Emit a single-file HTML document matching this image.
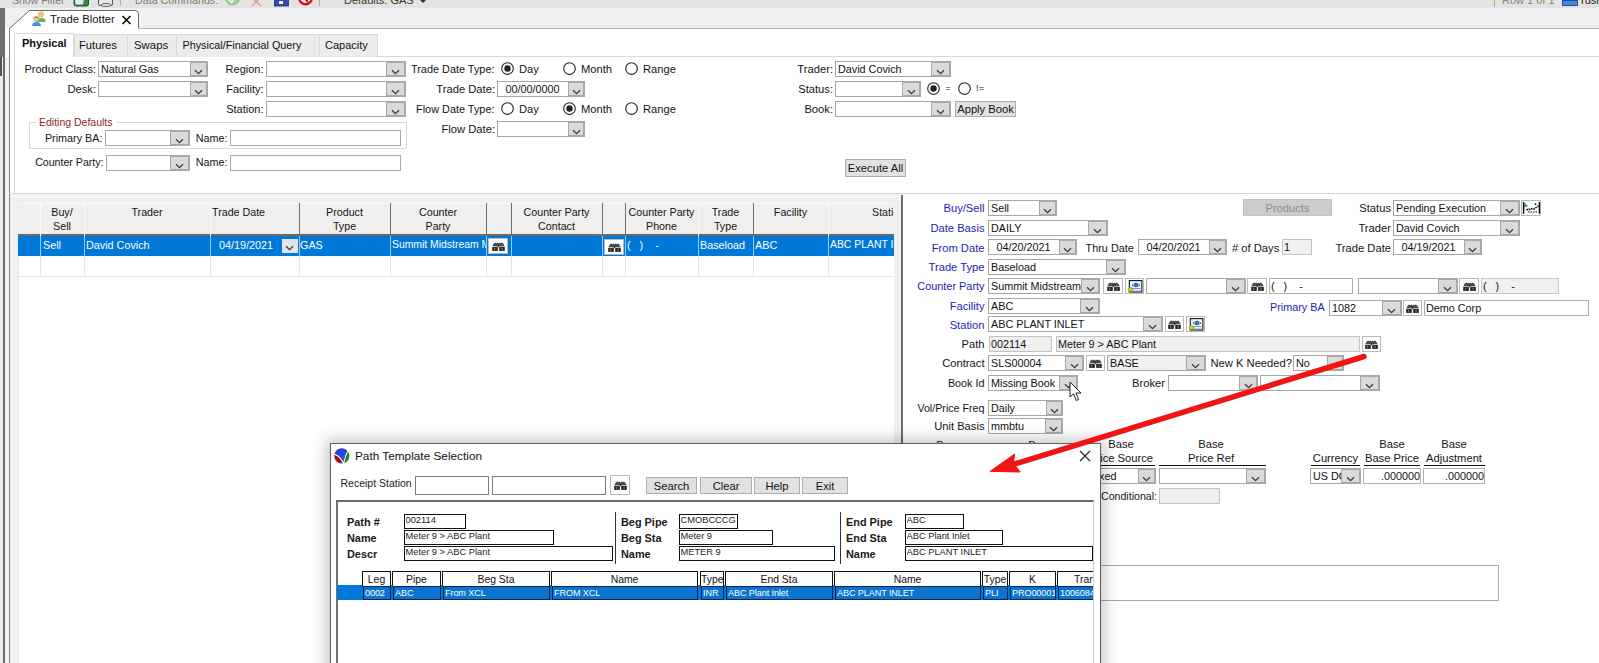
<!DOCTYPE html><html><head><meta charset="utf-8"><style>
html,body{margin:0;padding:0;}
body{width:1599px;height:663px;overflow:hidden;position:relative;background:#fff;font-family:"Liberation Sans",sans-serif;font-size:11.2px;color:#1e1e1e;}
.t,.ct,.r,.cb,.dd,.tb,.bt,.ib,.ic,.chev{position:absolute;box-sizing:border-box;}
.t{white-space:nowrap;line-height:14px;}
.ct{white-space:nowrap;overflow:hidden;font-size:10.8px;}
.cb{border:1px solid #a6a6a6;}
.dd{background:#dadada;border:2px solid #a8a8a8;border-left-width:1px;}
.tb{}
.bt{border:1px solid #adadad;text-align:center;white-space:nowrap;}
.ib{border:1px solid #b9b9b9;background:#fff;}
</style></head><body>

<div class="r" style="left:0px;top:0px;width:1599px;height:8px;background:#e5e3df;"></div>
<div class="r" style="left:0px;top:8px;width:1599px;height:20px;background:#f0f0f3;"></div>
<div class="t" style="left:12px;top:-7px;color:#7a7a7a;font-size:10.5px;">Show Filter</div>
<svg class="ic" style="left:73px;top:-4px" width="17" height="11" viewBox="0 0 17 11"><rect x="1" y="0.5" width="14.5" height="9.5" rx="2" fill="#2e8a2e" stroke="#2a4a3a" stroke-width="1"/><path d="M2 3 H11 L10 8.5 H2.5Z" fill="#dfeaf3"/></svg>
<svg class="ic" style="left:97px;top:-4px" width="18" height="11" viewBox="0 0 18 11"><rect x="1.5" y="0.5" width="14" height="9" rx="1.5" fill="#e6e6e6" stroke="#555" stroke-width="1"/><ellipse cx="9" cy="9" rx="5" ry="1.6" fill="#cfd6e6" stroke="#555" stroke-width="0.8"/></svg>
<div class="r" style="left:120px;top:0px;width:1px;height:6px;background:#b0b0b0;"></div>
<div class="t" style="left:135px;top:-7px;color:#7a7a7a;font-size:10.7px;">Data Commands:</div>
<svg class="ic" style="left:224px;top:-9px" width="17" height="15" viewBox="0 0 17 15"><circle cx="8.5" cy="7" r="7" fill="#9fd49a" stroke="#7fb87a" stroke-width="0.8"/><path d="M5 9 L7.5 11.5 L12 5" stroke="#eef8ee" stroke-width="1.6" fill="none"/></svg>
<svg class="ic" style="left:250px;top:-3px" width="13" height="10" viewBox="0 0 13 10"><path d="M1 0 L11 9 M11 0 L2 9" stroke="#e39a88" stroke-width="1.4"/></svg>
<svg class="ic" style="left:274px;top:-3px" width="15" height="10" viewBox="0 0 15 10"><rect x="0.5" y="0" width="14" height="9" fill="#3b46b4" stroke="#1e2a7a" stroke-width="0.8"/><rect x="5" y="4" width="4" height="3" fill="#f0f0ff"/></svg>
<svg class="ic" style="left:298px;top:-9px" width="15" height="15" viewBox="0 0 15 15"><circle cx="7.5" cy="7" r="6.3" fill="#fff" stroke="#d41414" stroke-width="2.4"/><path d="M5.5 3 L9.5 11" stroke="#d41414" stroke-width="2.2"/></svg>
<div class="r" style="left:319px;top:0px;width:1px;height:6px;background:#b0b0b0;"></div>
<div class="t" style="left:344px;top:-7px;color:#333;font-size:11px;">Defaults: GAS</div>
<svg class="ic" style="left:420px;top:0px" width="6" height="4"><path d="M0 0 L6 0 L3 3Z" fill="#333"/></svg>
<div class="r" style="left:1494px;top:0px;width:1px;height:7px;background:#a8a8a8;"></div>
<div class="t" style="left:1502px;top:-7px;color:#808080;font-size:11px;">Row 1 of 1</div>
<div class="r" style="left:1562px;top:0px;width:16px;height:6px;background:#4d86d6;border:1px solid #1f4fa0;"></div>
<div class="t" style="left:1581px;top:-7px;color:#222;font-size:11px;">rusr</div>
<div class="r" style="left:0px;top:8px;width:5px;height:49px;background:#6e6e6e;"></div>
<div class="r" style="left:0px;top:57px;width:3px;height:606px;background:#ececec;"></div>
<div class="r" style="left:0px;top:57px;width:2px;height:19px;border:1px solid #555;box-sizing:border-box;"></div>
<div class="r" style="left:3px;top:57px;width:2px;height:606px;background:#6a6a6a;"></div>
<div class="r" style="left:5px;top:57px;width:4px;height:606px;background:#f3f3f3;"></div>
<svg class="ic" style="left:0;top:0" width="1599" height="40"><path d="M9.5 40 L9.5 28.5 L29.5 10.5 L135 10.5 Q138.5 10.5 138.5 14 L138.5 28.5 L1599 28.5" fill="#fff" stroke="#686868" stroke-width="1"/><path d="M138.5 28.5 L1599 28.5 L1599 40 L9.5 40 L9.5 28.5Z" fill="#fff"/></svg>
<div class="r" style="left:9px;top:28px;width:1px;height:635px;background:#808080;"></div>
<svg class="ic" style="left:31px;top:11px" width="16" height="16" viewBox="0 0 16 16"><circle cx="10" cy="3.5" r="2.6" fill="#f2c98a" stroke="#c9a64a" stroke-width="0.6"/><path d="M6 9 Q10 5.5 14.5 8.5 L14.5 11 L6 11Z" fill="#5cb85c"/><path d="M7 2.2 Q10 0 13 2.2 L13 3 Q10 1.5 7 3Z" fill="#e8c040"/><circle cx="5.5" cy="8" r="2.6" fill="#f3c9a0" stroke="#b07a4a" stroke-width="0.5"/><path d="M3 6.8 Q5.5 4.5 8 6.8 L8 7.2 Q5.5 6 3 7.2Z" fill="#8a5a2a"/><path d="M1 15 Q1.5 11 5.5 11 Q9.5 11 10 15Z" fill="#3b8fe0"/></svg>
<div class="t" style="left:50px;top:11.600000000000001px;color:#111;font-size:11.3px;">Trade Blotter</div>
<svg class="ic" style="left:121px;top:15px" width="11" height="10" viewBox="0 0 11 10"><path d="M1.5 1 L9.5 9 M9.5 1 L1.5 9" stroke="#000" stroke-width="1.5"/></svg>
<div class="r" style="left:10px;top:29px;width:1589px;height:634px;background:#fff;"></div>
<div class="r" style="left:74px;top:34px;width:303px;height:23px;background:#ececec;"></div>
<div class="r" style="left:74px;top:34px;width:1px;height:23px;background:#d9d9d9;"></div>
<div class="r" style="left:127px;top:34px;width:1px;height:23px;background:#d9d9d9;"></div>
<div class="r" style="left:176px;top:34px;width:1px;height:23px;background:#d9d9d9;"></div>
<div class="r" style="left:314px;top:34px;width:1px;height:23px;background:#e2e2e2;"></div>
<div class="r" style="left:319px;top:34px;width:1px;height:23px;background:#d9d9d9;"></div>
<div class="r" style="left:377px;top:34px;width:1px;height:23px;background:#d9d9d9;"></div>
<div class="r" style="left:74px;top:34px;width:303px;height:1px;background:#d9d9d9;"></div>
<div class="r" style="left:377px;top:56px;width:1222px;height:1px;background:#d9d9d9;"></div>
<div class="r" style="left:14px;top:33px;width:60px;height:24px;background:#fff;border:1px solid #d9d9d9;border-bottom:none;box-sizing:border-box;"></div>
<div class="t" style="left:22px;top:36px;color:#111;font-size:11px;font-weight:bold;">Physical</div>
<div class="t" style="left:79px;top:38px;color:#111;font-size:11.2px;">Futures</div>
<div class="t" style="left:134px;top:38px;color:#111;font-size:11.4px;">Swaps</div>
<div class="t" style="left:182.5px;top:38px;color:#111;font-size:10.8px;">Physical/Financial Query</div>
<div class="t" style="left:325px;top:38px;color:#111;font-size:11px;">Capacity</div>
<div class="r" style="left:14px;top:56px;width:1px;height:138px;background:#d4d4d4;"></div>
<div class="r" style="left:9px;top:193px;width:1590px;height:1px;background:#d4d4d4;"></div>
<div class="t" style="left:-304px;width:400px;text-align:right;top:62px;color:#141414;font-size:11px;">Product Class:</div>
<div class="cb" style="left:98px;top:61px;width:110px;height:16px;background:#fff"></div>
<div class="ct" style="left:101px;top:61px;width:89px;height:16px;line-height:16px;color:#111">Natural Gas</div>
<div class="dd" style="left:190px;top:61px;width:18px;height:16px"></div>
<svg class="chev" style="left:194.0px;top:68.6px" width="9" height="6" viewBox="0 0 9 6"><path d="M1 1.2 L4.5 4.6 L8 1.2" fill="none" stroke="#3a3a3a" stroke-width="1.3"/></svg>
<div class="t" style="left:-304px;width:400px;text-align:right;top:82px;color:#141414;font-size:11.2px;">Desk:</div>
<div class="cb" style="left:98px;top:81px;width:110px;height:16px;background:#fff"></div>
<div class="dd" style="left:190px;top:81px;width:18px;height:16px"></div>
<svg class="chev" style="left:194.0px;top:88.6px" width="9" height="6" viewBox="0 0 9 6"><path d="M1 1.2 L4.5 4.6 L8 1.2" fill="none" stroke="#3a3a3a" stroke-width="1.3"/></svg>
<div class="t" style="left:-136.5px;width:400px;text-align:right;top:62px;color:#141414;font-size:11px;">Region:</div>
<div class="cb" style="left:266px;top:61px;width:140px;height:16px;background:#fff"></div>
<div class="dd" style="left:386px;top:61px;width:20px;height:16px"></div>
<svg class="chev" style="left:391.0px;top:68.6px" width="9" height="6" viewBox="0 0 9 6"><path d="M1 1.2 L4.5 4.6 L8 1.2" fill="none" stroke="#3a3a3a" stroke-width="1.3"/></svg>
<div class="t" style="left:-136.5px;width:400px;text-align:right;top:82px;color:#141414;font-size:11px;">Facility:</div>
<div class="cb" style="left:266px;top:81px;width:140px;height:16px;background:#fff"></div>
<div class="dd" style="left:386px;top:81px;width:20px;height:16px"></div>
<svg class="chev" style="left:391.0px;top:88.6px" width="9" height="6" viewBox="0 0 9 6"><path d="M1 1.2 L4.5 4.6 L8 1.2" fill="none" stroke="#3a3a3a" stroke-width="1.3"/></svg>
<div class="t" style="left:-136.5px;width:400px;text-align:right;top:102px;color:#141414;font-size:11px;">Station:</div>
<div class="cb" style="left:266px;top:101px;width:140px;height:16px;background:#fff"></div>
<div class="dd" style="left:386px;top:101px;width:20px;height:16px"></div>
<svg class="chev" style="left:391.0px;top:108.6px" width="9" height="6" viewBox="0 0 9 6"><path d="M1 1.2 L4.5 4.6 L8 1.2" fill="none" stroke="#3a3a3a" stroke-width="1.3"/></svg>
<div class="t" style="left:94.5px;width:400px;text-align:right;top:62px;color:#141414;font-size:10.9px;">Trade Date Type:</div>
<svg class="ic" style="left:500.9px;top:62.3px" width="13" height="13" viewBox="0 0 13 13"><circle cx="6.5" cy="6.5" r="5.8" fill="#fff" stroke="#2a2a2a" stroke-width="1.15"/><circle cx="6.5" cy="6.5" r="3.2" fill="#222"/></svg>
<div class="t" style="left:519px;top:62px;color:#141414;font-size:11.2px;">Day</div>
<svg class="ic" style="left:562.9px;top:62.3px" width="13" height="13" viewBox="0 0 13 13"><circle cx="6.5" cy="6.5" r="5.8" fill="#fff" stroke="#2a2a2a" stroke-width="1.15"/></svg>
<div class="t" style="left:581px;top:62px;color:#141414;font-size:11.2px;">Month</div>
<svg class="ic" style="left:624.8px;top:62.3px" width="13" height="13" viewBox="0 0 13 13"><circle cx="6.5" cy="6.5" r="5.8" fill="#fff" stroke="#2a2a2a" stroke-width="1.15"/></svg>
<div class="t" style="left:643px;top:62px;color:#141414;font-size:11.2px;">Range</div>
<div class="t" style="left:95px;width:400px;text-align:right;top:82px;color:#141414;font-size:11.2px;">Trade Date:</div>
<div class="cb" style="left:497px;top:81px;width:88px;height:16px;background:#fff"></div>
<div class="ct" style="left:497px;top:81px;width:71px;height:16px;line-height:16px;text-align:center;color:#111">00/00/0000</div>
<div class="dd" style="left:568px;top:81px;width:17px;height:16px"></div>
<svg class="chev" style="left:571.5px;top:88.6px" width="9" height="6" viewBox="0 0 9 6"><path d="M1 1.2 L4.5 4.6 L8 1.2" fill="none" stroke="#3a3a3a" stroke-width="1.3"/></svg>
<div class="t" style="left:94.5px;width:400px;text-align:right;top:102px;color:#141414;font-size:10.9px;">Flow Date Type:</div>
<svg class="ic" style="left:500.9px;top:102.3px" width="13" height="13" viewBox="0 0 13 13"><circle cx="6.5" cy="6.5" r="5.8" fill="#fff" stroke="#2a2a2a" stroke-width="1.15"/></svg>
<div class="t" style="left:519px;top:102px;color:#141414;font-size:11.2px;">Day</div>
<svg class="ic" style="left:562.9px;top:102.3px" width="13" height="13" viewBox="0 0 13 13"><circle cx="6.5" cy="6.5" r="5.8" fill="#fff" stroke="#2a2a2a" stroke-width="1.15"/><circle cx="6.5" cy="6.5" r="3.2" fill="#222"/></svg>
<div class="t" style="left:581px;top:102px;color:#141414;font-size:11.2px;">Month</div>
<svg class="ic" style="left:624.8px;top:102.3px" width="13" height="13" viewBox="0 0 13 13"><circle cx="6.5" cy="6.5" r="5.8" fill="#fff" stroke="#2a2a2a" stroke-width="1.15"/></svg>
<div class="t" style="left:643px;top:102px;color:#141414;font-size:11.2px;">Range</div>
<div class="t" style="left:95px;width:400px;text-align:right;top:122px;color:#141414;font-size:11.2px;">Flow Date:</div>
<div class="cb" style="left:497px;top:121px;width:88px;height:16px;background:#fff"></div>
<div class="dd" style="left:568px;top:121px;width:17px;height:16px"></div>
<svg class="chev" style="left:571.5px;top:128.6px" width="9" height="6" viewBox="0 0 9 6"><path d="M1 1.2 L4.5 4.6 L8 1.2" fill="none" stroke="#3a3a3a" stroke-width="1.3"/></svg>
<div class="t" style="left:433px;width:400px;text-align:right;top:62px;color:#141414;font-size:11.2px;">Trader:</div>
<div class="cb" style="left:835px;top:61px;width:116px;height:16px;background:#fff"></div>
<div class="ct" style="left:838px;top:61px;width:93px;height:16px;line-height:16px;color:#111">David Covich</div>
<div class="dd" style="left:931px;top:61px;width:20px;height:16px"></div>
<svg class="chev" style="left:936.0px;top:68.6px" width="9" height="6" viewBox="0 0 9 6"><path d="M1 1.2 L4.5 4.6 L8 1.2" fill="none" stroke="#3a3a3a" stroke-width="1.3"/></svg>
<div class="t" style="left:433px;width:400px;text-align:right;top:82px;color:#141414;font-size:11.2px;">Status:</div>
<div class="cb" style="left:835px;top:81px;width:86px;height:16px;background:#fff"></div>
<div class="dd" style="left:902px;top:81px;width:19px;height:16px"></div>
<svg class="chev" style="left:906.5px;top:88.6px" width="9" height="6" viewBox="0 0 9 6"><path d="M1 1.2 L4.5 4.6 L8 1.2" fill="none" stroke="#3a3a3a" stroke-width="1.3"/></svg>
<svg class="ic" style="left:926.8px;top:82.3px" width="13" height="13" viewBox="0 0 13 13"><circle cx="6.5" cy="6.5" r="5.8" fill="#fff" stroke="#2a2a2a" stroke-width="1.15"/><circle cx="6.5" cy="6.5" r="3.2" fill="#222"/></svg>
<div class="t" style="left:945.5px;top:81px;color:#141414;font-size:9px;">=</div>
<svg class="ic" style="left:957.8px;top:82.3px" width="13" height="13" viewBox="0 0 13 13"><circle cx="6.5" cy="6.5" r="5.8" fill="#fff" stroke="#2a2a2a" stroke-width="1.15"/></svg>
<div class="t" style="left:976px;top:81px;color:#141414;font-size:9.5px;">!=</div>
<div class="t" style="left:433px;width:400px;text-align:right;top:102px;color:#141414;font-size:11.2px;">Book:</div>
<div class="cb" style="left:835px;top:101px;width:116px;height:16px;background:#fff"></div>
<div class="dd" style="left:931px;top:101px;width:20px;height:16px"></div>
<svg class="chev" style="left:936.0px;top:108.6px" width="9" height="6" viewBox="0 0 9 6"><path d="M1 1.2 L4.5 4.6 L8 1.2" fill="none" stroke="#3a3a3a" stroke-width="1.3"/></svg>
<div class="bt" style="left:955px;top:101px;width:61px;height:16px;line-height:15px;background:#e1e1e1;border-color:#adadad;color:#111">Apply Book</div>
<div class="bt" style="left:845px;top:159px;width:61px;height:18px;line-height:17px;background:#e1e1e1;border-color:#adadad;color:#111">Execute All</div>
<div class="r" style="left:29px;top:122px;width:378px;height:27px;border:1px solid #d8d8d8;box-sizing:border-box;"></div>
<div class="r" style="left:36px;top:118px;width:80px;height:8px;background:#fff;"></div>
<div class="t" style="left:39px;top:115px;color:#8c2a2a;font-size:10.5px;">Editing Defaults</div>
<div class="t" style="left:-297.5px;width:400px;text-align:right;top:131px;color:#141414;font-size:10.8px;">Primary BA:</div>
<div class="cb" style="left:105px;top:130px;width:85px;height:16px;background:#fff"></div>
<div class="dd" style="left:170px;top:130px;width:20px;height:16px"></div>
<svg class="chev" style="left:175.0px;top:137.6px" width="9" height="6" viewBox="0 0 9 6"><path d="M1 1.2 L4.5 4.6 L8 1.2" fill="none" stroke="#3a3a3a" stroke-width="1.3"/></svg>
<div class="t" style="left:-172.5px;width:400px;text-align:right;top:131px;color:#141414;font-size:10.8px;">Name:</div>
<div class="tb" style="left:230px;top:130px;width:171px;height:16px;background:#fff;border:1px solid #a9a9a9;"></div>
<div class="t" style="left:-296.5px;width:400px;text-align:right;top:155px;color:#141414;font-size:10.6px;">Counter Party:</div>
<div class="cb" style="left:106px;top:155px;width:84px;height:16px;background:#fff"></div>
<div class="dd" style="left:170px;top:155px;width:20px;height:16px"></div>
<svg class="chev" style="left:175.0px;top:162.6px" width="9" height="6" viewBox="0 0 9 6"><path d="M1 1.2 L4.5 4.6 L8 1.2" fill="none" stroke="#3a3a3a" stroke-width="1.3"/></svg>
<div class="t" style="left:-172.5px;width:400px;text-align:right;top:155px;color:#141414;font-size:10.8px;">Name:</div>
<div class="tb" style="left:230px;top:155px;width:171px;height:16px;background:#fff;border:1px solid #a9a9a9;"></div>
<div class="r" style="left:10px;top:194px;width:891px;height:469px;background:#f0f0f0;"></div>
<div class="r" style="left:18px;top:256px;width:876px;height:407px;background:#fff;"></div>
<div class="r" style="left:10px;top:196px;width:891px;height:1px;background:#fbfbfb;"></div>
<div class="r" style="left:18px;top:203px;width:876px;height:31px;background:#efefef;"></div>
<div class="r" style="left:18px;top:203px;width:876px;height:1px;background:#fafafa;"></div>
<div class="r" style="left:40px;top:203px;width:1px;height:31px;background:#fbfbfb;"></div>
<div class="r" style="left:84px;top:203px;width:1px;height:31px;background:#fbfbfb;"></div>
<div class="r" style="left:210px;top:203px;width:1px;height:31px;background:#fbfbfb;"></div>
<div class="r" style="left:299px;top:203px;width:1px;height:32px;background:#6f6f6f;"></div>
<div class="r" style="left:390px;top:203px;width:1px;height:32px;background:#6f6f6f;"></div>
<div class="r" style="left:486px;top:203px;width:1px;height:32px;background:#6f6f6f;"></div>
<div class="r" style="left:511px;top:203px;width:1px;height:32px;background:#6f6f6f;"></div>
<div class="r" style="left:602px;top:203px;width:1px;height:32px;background:#6f6f6f;"></div>
<div class="r" style="left:625px;top:203px;width:1px;height:32px;background:#6f6f6f;"></div>
<div class="r" style="left:698px;top:203px;width:1px;height:31px;background:#fbfbfb;"></div>
<div class="r" style="left:753px;top:203px;width:1px;height:32px;background:#6f6f6f;"></div>
<div class="r" style="left:828px;top:203px;width:1px;height:31px;background:#fbfbfb;"></div>
<div class="r" style="left:18px;top:234px;width:876px;height:2px;background:#6d6a66;"></div>
<div class="r" style="left:40px;top:234px;width:1px;height:2px;background:#fff;"></div>
<div class="r" style="left:84px;top:234px;width:1px;height:2px;background:#fff;"></div>
<div class="r" style="left:210px;top:234px;width:1px;height:2px;background:#fff;"></div>
<div class="r" style="left:698px;top:234px;width:1px;height:2px;background:#fff;"></div>
<div class="r" style="left:828px;top:234px;width:1px;height:2px;background:#fff;"></div>
<div class="r" style="left:18px;top:236px;width:876px;height:20px;background:#0078d7;"></div>
<div class="r" style="left:40px;top:236px;width:1px;height:20px;background:#9ccaf0;"></div>
<div class="r" style="left:40px;top:256px;width:1px;height:20px;background:#e6e6e6;"></div>
<div class="r" style="left:84px;top:236px;width:1px;height:20px;background:#9ccaf0;"></div>
<div class="r" style="left:84px;top:256px;width:1px;height:20px;background:#e6e6e6;"></div>
<div class="r" style="left:210px;top:236px;width:1px;height:20px;background:#9ccaf0;"></div>
<div class="r" style="left:210px;top:256px;width:1px;height:20px;background:#e6e6e6;"></div>
<div class="r" style="left:299px;top:236px;width:1px;height:20px;background:#9ccaf0;"></div>
<div class="r" style="left:299px;top:256px;width:1px;height:20px;background:#e6e6e6;"></div>
<div class="r" style="left:390px;top:236px;width:1px;height:20px;background:#9ccaf0;"></div>
<div class="r" style="left:390px;top:256px;width:1px;height:20px;background:#e6e6e6;"></div>
<div class="r" style="left:486px;top:236px;width:1px;height:20px;background:#9ccaf0;"></div>
<div class="r" style="left:486px;top:256px;width:1px;height:20px;background:#e6e6e6;"></div>
<div class="r" style="left:511px;top:236px;width:1px;height:20px;background:#9ccaf0;"></div>
<div class="r" style="left:511px;top:256px;width:1px;height:20px;background:#e6e6e6;"></div>
<div class="r" style="left:602px;top:236px;width:1px;height:20px;background:#9ccaf0;"></div>
<div class="r" style="left:602px;top:256px;width:1px;height:20px;background:#e6e6e6;"></div>
<div class="r" style="left:625px;top:236px;width:1px;height:20px;background:#9ccaf0;"></div>
<div class="r" style="left:625px;top:256px;width:1px;height:20px;background:#e6e6e6;"></div>
<div class="r" style="left:698px;top:236px;width:1px;height:20px;background:#9ccaf0;"></div>
<div class="r" style="left:698px;top:256px;width:1px;height:20px;background:#e6e6e6;"></div>
<div class="r" style="left:753px;top:236px;width:1px;height:20px;background:#9ccaf0;"></div>
<div class="r" style="left:753px;top:256px;width:1px;height:20px;background:#e6e6e6;"></div>
<div class="r" style="left:828px;top:236px;width:1px;height:20px;background:#9ccaf0;"></div>
<div class="r" style="left:828px;top:256px;width:1px;height:20px;background:#e6e6e6;"></div>
<div class="r" style="left:18px;top:276px;width:876px;height:1px;background:#e6e6e6;"></div>
<div class="r" style="left:18px;top:256px;width:1px;height:407px;background:#e6e6e6;"></div>
<div class="t" style="left:-138px;width:400px;text-align:center;top:205px;color:#141414;font-size:10.7px;">Buy/</div>
<div class="t" style="left:-138px;width:400px;text-align:center;top:219px;color:#141414;font-size:10.7px;">Sell</div>
<div class="t" style="left:-53px;width:400px;text-align:center;top:205px;color:#141414;font-size:10.7px;">Trader</div>
<div class="t" style="left:212px;top:205px;color:#141414;font-size:10.7px;">Trade Date</div>
<div class="t" style="left:144.5px;width:400px;text-align:center;top:205px;color:#141414;font-size:10.7px;">Product</div>
<div class="t" style="left:144.5px;width:400px;text-align:center;top:219px;color:#141414;font-size:10.7px;">Type</div>
<div class="t" style="left:238px;width:400px;text-align:center;top:205px;color:#141414;font-size:10.7px;">Counter</div>
<div class="t" style="left:238px;width:400px;text-align:center;top:219px;color:#141414;font-size:10.7px;">Party</div>
<div class="t" style="left:356.5px;width:400px;text-align:center;top:205px;color:#141414;font-size:10.7px;">Counter Party</div>
<div class="t" style="left:356.5px;width:400px;text-align:center;top:219px;color:#141414;font-size:10.7px;">Contact</div>
<div class="t" style="left:461.5px;width:400px;text-align:center;top:205px;color:#141414;font-size:10.7px;">Counter Party</div>
<div class="t" style="left:461.5px;width:400px;text-align:center;top:219px;color:#141414;font-size:10.7px;">Phone</div>
<div class="t" style="left:525.5px;width:400px;text-align:center;top:205px;color:#141414;font-size:10.7px;">Trade</div>
<div class="t" style="left:525.5px;width:400px;text-align:center;top:219px;color:#141414;font-size:10.7px;">Type</div>
<div class="t" style="left:590.5px;width:400px;text-align:center;top:205px;color:#141414;font-size:10.7px;">Facility</div>
<div class="r" style="left:828px;top:204px;width:66px;height:30px;overflow:hidden"><div class="t" style="left:44px;top:1px;font-size:10.7px">Station</div></div>
<div class="t" style="left:43px;top:238px;color:#fff;font-size:10.8px;">Sell</div>
<div class="t" style="left:86px;top:238px;color:#fff;font-size:10.8px;">David Covich</div>
<div class="t" style="left:219px;top:238px;color:#fff;font-size:10.8px;">04/19/2021</div>
<div class="dd" style="left:282px;top:239px;width:16px;height:14px;background:#e4e4e4;border:none"></div>
<svg class="chev" style="left:285.0px;top:245.2px" width="9" height="6" viewBox="0 0 9 6"><path d="M1 1.2 L4.5 4.6 L8 1.2" fill="none" stroke="#3a3a3a" stroke-width="1.3"/></svg>
<div class="t" style="left:300px;top:238px;color:#fff;font-size:10.8px;">GAS</div>
<div class="r" style="left:391px;top:236px;width:95px;height:20px;overflow:hidden"><div class="t" style="left:1px;top:2px;color:#fff;font-size:10.4px">Summit Midstream M</div></div>
<div class="ib" style="left:488px;top:238px;width:20px;height:16px"></div>
<svg class="ic" style="left:491.5px;top:241.5px" width="13" height="9" viewBox="0 0 13 9"><path d="M0.3 4.2 L1.8 1.6 L3.2 0.6 L4.6 1.2 L5.4 0.4 L6.5 1.4 L7.6 0.4 L8.4 1.2 L9.8 0.6 L11.2 1.6 L12.7 4.2 Z" fill="#4a4a4a"/><rect x="0.2" y="4.9" width="5.6" height="4" fill="#222"/><rect x="7.2" y="4.9" width="5.6" height="4" fill="#222"/><rect x="5.8" y="2.5" width="1.4" height="2.6" fill="#333"/><rect x="2.3" y="5.6" width="0.9" height="2.6" fill="#9a9a9a"/><rect x="9.6" y="5.6" width="0.9" height="2.6" fill="#9a9a9a"/></svg>
<div class="ib" style="left:604px;top:239px;width:20px;height:16px"></div>
<svg class="ic" style="left:607.5px;top:242.5px" width="13" height="9" viewBox="0 0 13 9"><path d="M0.3 4.2 L1.8 1.6 L3.2 0.6 L4.6 1.2 L5.4 0.4 L6.5 1.4 L7.6 0.4 L8.4 1.2 L9.8 0.6 L11.2 1.6 L12.7 4.2 Z" fill="#4a4a4a"/><rect x="0.2" y="4.9" width="5.6" height="4" fill="#222"/><rect x="7.2" y="4.9" width="5.6" height="4" fill="#222"/><rect x="5.8" y="2.5" width="1.4" height="2.6" fill="#333"/><rect x="2.3" y="5.6" width="0.9" height="2.6" fill="#9a9a9a"/><rect x="9.6" y="5.6" width="0.9" height="2.6" fill="#9a9a9a"/></svg>
<div class="t" style="left:627px;top:238px;color:#fff;font-size:10.8px;">(&nbsp;&nbsp;&nbsp;)&nbsp;&nbsp;&nbsp;&nbsp;-</div>
<div class="t" style="left:700px;top:238px;color:#fff;font-size:10.8px;">Baseload</div>
<div class="t" style="left:755px;top:238px;color:#fff;font-size:10.8px;">ABC</div>
<div class="r" style="left:829px;top:236px;width:65px;height:20px;overflow:hidden"><div class="t" style="left:1px;top:2px;color:#fff;font-size:10.4px">ABC PLANT INLET</div></div>
<div class="r" style="left:901px;top:194px;width:698px;height:469px;background:#fff;"></div>
<div class="r" style="left:901px;top:195px;width:2px;height:468px;background:#6b6b6b;"></div>
<div class="t" style="left:584.5px;width:400px;text-align:right;top:201px;color:#1e1eb0;font-size:11.2px;">Buy/Sell</div>
<div class="cb" style="left:988px;top:200px;width:69px;height:16px;background:#fff"></div>
<div class="ct" style="left:991px;top:200px;width:48px;height:16px;line-height:16px;color:#111">Sell</div>
<div class="dd" style="left:1039px;top:200px;width:18px;height:16px"></div>
<svg class="chev" style="left:1043.0px;top:207.6px" width="9" height="6" viewBox="0 0 9 6"><path d="M1 1.2 L4.5 4.6 L8 1.2" fill="none" stroke="#3a3a3a" stroke-width="1.3"/></svg>
<div class="bt" style="left:1243px;top:199px;width:89px;height:17px;line-height:16px;background:#cccccc;border-color:#c4c4c4;color:#8c8c8c">Products</div>
<div class="t" style="left:991px;width:400px;text-align:right;top:201px;color:#141414;font-size:11.2px;">Status</div>
<div class="cb" style="left:1393px;top:200px;width:127px;height:16px;background:#fff"></div>
<div class="ct" style="left:1396px;top:200px;width:104px;height:16px;line-height:16px;color:#111">Pending Execution</div>
<div class="dd" style="left:1500px;top:200px;width:20px;height:16px"></div>
<svg class="chev" style="left:1505.0px;top:207.6px" width="9" height="6" viewBox="0 0 9 6"><path d="M1 1.2 L4.5 4.6 L8 1.2" fill="none" stroke="#3a3a3a" stroke-width="1.3"/></svg>
<div class="ib" style="left:1521px;top:200px;width:20px;height:16px;background:#fff;border-color:#b8b8b8"></div>
<svg class="ic" style="left:1521px;top:200px" width="20" height="16" viewBox="0 0 20 16"><path d="M2.6 2 V13.8 M18.4 2 V13.8" stroke="#000" stroke-width="1.4"/><path d="M3.2 2.6 L7 6 L3.2 7.6Z" fill="#2a8a7a"/><path d="M5.5 10.2 Q7 8.4 9 9.6 Q11 8 13 9 Q15 7.5 17.5 6" fill="none" stroke="#000" stroke-width="1.6" stroke-dasharray="1.6 0.9"/><circle cx="14.5" cy="4.2" r="0.9" fill="#000"/><path d="M7 12 H16" stroke="#000" stroke-width="1.2" stroke-dasharray="1.5 1"/></svg>
<div class="t" style="left:584.5px;width:400px;text-align:right;top:221px;color:#1e1eb0;font-size:11.2px;">Date Basis</div>
<div class="cb" style="left:988px;top:220px;width:120px;height:16px;background:#fff"></div>
<div class="ct" style="left:991px;top:220px;width:97px;height:16px;line-height:16px;color:#111">DAILY</div>
<div class="dd" style="left:1088px;top:220px;width:20px;height:16px"></div>
<svg class="chev" style="left:1093.0px;top:227.6px" width="9" height="6" viewBox="0 0 9 6"><path d="M1 1.2 L4.5 4.6 L8 1.2" fill="none" stroke="#3a3a3a" stroke-width="1.3"/></svg>
<div class="t" style="left:991px;width:400px;text-align:right;top:221px;color:#141414;font-size:11.2px;">Trader</div>
<div class="cb" style="left:1393px;top:220px;width:127px;height:16px;background:#fff"></div>
<div class="ct" style="left:1396px;top:220px;width:104px;height:16px;line-height:16px;color:#111">David Covich</div>
<div class="dd" style="left:1500px;top:220px;width:20px;height:16px"></div>
<svg class="chev" style="left:1505.0px;top:227.6px" width="9" height="6" viewBox="0 0 9 6"><path d="M1 1.2 L4.5 4.6 L8 1.2" fill="none" stroke="#3a3a3a" stroke-width="1.3"/></svg>
<div class="t" style="left:584.5px;width:400px;text-align:right;top:240.5px;color:#1e1eb0;font-size:11.2px;">From Date</div>
<div class="cb" style="left:988px;top:239px;width:89px;height:16px;background:#fff"></div>
<div class="ct" style="left:988px;top:239px;width:71px;height:16px;line-height:16px;text-align:center;color:#111">04/20/2021</div>
<div class="dd" style="left:1059px;top:239px;width:18px;height:16px"></div>
<svg class="chev" style="left:1063.0px;top:246.6px" width="9" height="6" viewBox="0 0 9 6"><path d="M1 1.2 L4.5 4.6 L8 1.2" fill="none" stroke="#3a3a3a" stroke-width="1.3"/></svg>
<div class="t" style="left:1085.5px;top:240.5px;color:#141414;font-size:10.9px;">Thru Date</div>
<div class="cb" style="left:1138px;top:239px;width:89px;height:16px;background:#fff"></div>
<div class="ct" style="left:1138px;top:239px;width:71px;height:16px;line-height:16px;text-align:center;color:#111">04/20/2021</div>
<div class="dd" style="left:1209px;top:239px;width:18px;height:16px"></div>
<svg class="chev" style="left:1213.0px;top:246.6px" width="9" height="6" viewBox="0 0 9 6"><path d="M1 1.2 L4.5 4.6 L8 1.2" fill="none" stroke="#3a3a3a" stroke-width="1.3"/></svg>
<div class="t" style="left:1232px;top:240.5px;color:#141414;font-size:11.2px;"># of Days</div>
<div class="tb" style="left:1282px;top:239px;width:30px;height:16px;background:#f0f0f0;border:1px solid #c2c2c2;"></div>
<div class="ct" style="left:1284px;top:239px;width:26px;height:16px;line-height:16px;text-align:left;color:#111;">1</div>
<div class="t" style="left:991px;width:400px;text-align:right;top:240.5px;color:#141414;font-size:11.2px;">Trade Date</div>
<div class="cb" style="left:1393px;top:239px;width:89px;height:16px;background:#fff"></div>
<div class="ct" style="left:1393px;top:239px;width:71px;height:16px;line-height:16px;text-align:center;color:#111">04/19/2021</div>
<div class="dd" style="left:1464px;top:239px;width:18px;height:16px"></div>
<svg class="chev" style="left:1468.0px;top:246.6px" width="9" height="6" viewBox="0 0 9 6"><path d="M1 1.2 L4.5 4.6 L8 1.2" fill="none" stroke="#3a3a3a" stroke-width="1.3"/></svg>
<div class="t" style="left:584.5px;width:400px;text-align:right;top:260px;color:#1e1eb0;font-size:11.2px;">Trade Type</div>
<div class="cb" style="left:988px;top:259px;width:138px;height:16px;background:#fff"></div>
<div class="ct" style="left:991px;top:259px;width:115px;height:16px;line-height:16px;color:#111">Baseload</div>
<div class="dd" style="left:1106px;top:259px;width:20px;height:16px"></div>
<svg class="chev" style="left:1111.0px;top:266.6px" width="9" height="6" viewBox="0 0 9 6"><path d="M1 1.2 L4.5 4.6 L8 1.2" fill="none" stroke="#3a3a3a" stroke-width="1.3"/></svg>
<div class="t" style="left:584.5px;width:400px;text-align:right;top:279px;color:#1e1eb0;font-size:10.9px;">Counter Party</div>
<div class="cb" style="left:988px;top:278px;width:112px;height:16px;background:#fff"></div>
<div class="ct" style="left:991px;top:278px;width:90px;height:16px;line-height:16px;color:#111">Summit Midstream Partners</div>
<div class="dd" style="left:1081px;top:278px;width:19px;height:16px"></div>
<svg class="chev" style="left:1085.5px;top:285.6px" width="9" height="6" viewBox="0 0 9 6"><path d="M1 1.2 L4.5 4.6 L8 1.2" fill="none" stroke="#3a3a3a" stroke-width="1.3"/></svg>
<div class="ib" style="left:1103px;top:278px;width:20px;height:16px"></div>
<svg class="ic" style="left:1106.5px;top:281.5px" width="13" height="9" viewBox="0 0 13 9"><path d="M0.3 4.2 L1.8 1.6 L3.2 0.6 L4.6 1.2 L5.4 0.4 L6.5 1.4 L7.6 0.4 L8.4 1.2 L9.8 0.6 L11.2 1.6 L12.7 4.2 Z" fill="#4a4a4a"/><rect x="0.2" y="4.9" width="5.6" height="4" fill="#222"/><rect x="7.2" y="4.9" width="5.6" height="4" fill="#222"/><rect x="5.8" y="2.5" width="1.4" height="2.6" fill="#333"/><rect x="2.3" y="5.6" width="0.9" height="2.6" fill="#9a9a9a"/><rect x="9.6" y="5.6" width="0.9" height="2.6" fill="#9a9a9a"/></svg>
<div class="ib" style="left:1125px;top:278px;width:19px;height:16px"></div>
<svg class="ic" style="left:1126px;top:279px" width="17" height="14" viewBox="0 0 17 14"><rect x="3.3" y="1.6" width="12.6" height="11.4" fill="#f4f8ff" stroke="#111" stroke-width="1.1"/><path d="M7.5 5 L6 6.2 L7.5 7.4 M12.5 5 L14 6.2 L12.5 7.4" fill="none" stroke="#2a4a7a" stroke-width="0.9"/><circle cx="10" cy="6" r="2" fill="#2a7ad0" stroke="#1a3a6a" stroke-width="0.6"/><rect x="6" y="9" width="8.5" height="1" fill="#6a9ad8"/><rect x="6" y="10.8" width="8.5" height="0.8" fill="#9ac0e8"/><path d="M2 10.5 L3.5 8.6 L5.5 8.8 L6.8 10.4 L5.4 12.4 L3 12.6 Z" fill="#c8d820" stroke="#6a7a00" stroke-width="0.6"/></svg>
<div class="cb" style="left:1146px;top:278px;width:100px;height:16px;background:#fff"></div>
<div class="dd" style="left:1226px;top:278px;width:20px;height:16px"></div>
<svg class="chev" style="left:1231.0px;top:285.6px" width="9" height="6" viewBox="0 0 9 6"><path d="M1 1.2 L4.5 4.6 L8 1.2" fill="none" stroke="#3a3a3a" stroke-width="1.3"/></svg>
<div class="ib" style="left:1247px;top:278px;width:20px;height:16px"></div>
<svg class="ic" style="left:1250.5px;top:281.5px" width="13" height="9" viewBox="0 0 13 9"><path d="M0.3 4.2 L1.8 1.6 L3.2 0.6 L4.6 1.2 L5.4 0.4 L6.5 1.4 L7.6 0.4 L8.4 1.2 L9.8 0.6 L11.2 1.6 L12.7 4.2 Z" fill="#4a4a4a"/><rect x="0.2" y="4.9" width="5.6" height="4" fill="#222"/><rect x="7.2" y="4.9" width="5.6" height="4" fill="#222"/><rect x="5.8" y="2.5" width="1.4" height="2.6" fill="#333"/><rect x="2.3" y="5.6" width="0.9" height="2.6" fill="#9a9a9a"/><rect x="9.6" y="5.6" width="0.9" height="2.6" fill="#9a9a9a"/></svg>
<div class="tb" style="left:1269px;top:278px;width:84px;height:16px;background:#fff;border:1px solid #b0b0b0;"></div>
<div class="ct" style="left:1271px;top:278px;width:80px;height:16px;line-height:16px;text-align:left;color:#111;">(&nbsp;&nbsp;&nbsp;)&nbsp;&nbsp;&nbsp;&nbsp;-</div>
<div class="cb" style="left:1358px;top:278px;width:100px;height:16px;background:#fff"></div>
<div class="dd" style="left:1438px;top:278px;width:20px;height:16px"></div>
<svg class="chev" style="left:1443.0px;top:285.6px" width="9" height="6" viewBox="0 0 9 6"><path d="M1 1.2 L4.5 4.6 L8 1.2" fill="none" stroke="#3a3a3a" stroke-width="1.3"/></svg>
<div class="ib" style="left:1459px;top:278px;width:20px;height:16px"></div>
<svg class="ic" style="left:1462.5px;top:281.5px" width="13" height="9" viewBox="0 0 13 9"><path d="M0.3 4.2 L1.8 1.6 L3.2 0.6 L4.6 1.2 L5.4 0.4 L6.5 1.4 L7.6 0.4 L8.4 1.2 L9.8 0.6 L11.2 1.6 L12.7 4.2 Z" fill="#4a4a4a"/><rect x="0.2" y="4.9" width="5.6" height="4" fill="#222"/><rect x="7.2" y="4.9" width="5.6" height="4" fill="#222"/><rect x="5.8" y="2.5" width="1.4" height="2.6" fill="#333"/><rect x="2.3" y="5.6" width="0.9" height="2.6" fill="#9a9a9a"/><rect x="9.6" y="5.6" width="0.9" height="2.6" fill="#9a9a9a"/></svg>
<div class="tb" style="left:1481px;top:278px;width:78px;height:16px;background:#f0f0f0;border:1px solid #c8c8c8;"></div>
<div class="ct" style="left:1483px;top:278px;width:74px;height:16px;line-height:16px;text-align:left;color:#111;">(&nbsp;&nbsp;&nbsp;)&nbsp;&nbsp;&nbsp;&nbsp;-</div>
<div class="t" style="left:584.5px;width:400px;text-align:right;top:298.5px;color:#1e1eb0;font-size:11.2px;">Facility</div>
<div class="cb" style="left:988px;top:298px;width:112px;height:16px;background:#fff"></div>
<div class="ct" style="left:991px;top:298px;width:89px;height:16px;line-height:16px;color:#111">ABC</div>
<div class="dd" style="left:1080px;top:298px;width:20px;height:16px"></div>
<svg class="chev" style="left:1085.0px;top:305.6px" width="9" height="6" viewBox="0 0 9 6"><path d="M1 1.2 L4.5 4.6 L8 1.2" fill="none" stroke="#3a3a3a" stroke-width="1.3"/></svg>
<div class="t" style="left:1270px;top:300px;color:#1e1eb0;font-size:10.8px;">Primary BA</div>
<div class="cb" style="left:1329px;top:300px;width:73px;height:16px;background:#fff"></div>
<div class="ct" style="left:1332px;top:300px;width:50px;height:16px;line-height:16px;color:#111">1082</div>
<div class="dd" style="left:1382px;top:300px;width:20px;height:16px"></div>
<svg class="chev" style="left:1387.0px;top:307.6px" width="9" height="6" viewBox="0 0 9 6"><path d="M1 1.2 L4.5 4.6 L8 1.2" fill="none" stroke="#3a3a3a" stroke-width="1.3"/></svg>
<div class="ib" style="left:1403px;top:300px;width:19px;height:16px"></div>
<svg class="ic" style="left:1406.0px;top:303.5px" width="13" height="9" viewBox="0 0 13 9"><path d="M0.3 4.2 L1.8 1.6 L3.2 0.6 L4.6 1.2 L5.4 0.4 L6.5 1.4 L7.6 0.4 L8.4 1.2 L9.8 0.6 L11.2 1.6 L12.7 4.2 Z" fill="#4a4a4a"/><rect x="0.2" y="4.9" width="5.6" height="4" fill="#222"/><rect x="7.2" y="4.9" width="5.6" height="4" fill="#222"/><rect x="5.8" y="2.5" width="1.4" height="2.6" fill="#333"/><rect x="2.3" y="5.6" width="0.9" height="2.6" fill="#9a9a9a"/><rect x="9.6" y="5.6" width="0.9" height="2.6" fill="#9a9a9a"/></svg>
<div class="tb" style="left:1424px;top:300px;width:165px;height:16px;background:#fff;border:1px solid #b0b0b0;"></div>
<div class="ct" style="left:1426px;top:300px;width:161px;height:16px;line-height:16px;text-align:left;color:#111;">Demo Corp</div>
<div class="t" style="left:584.5px;width:400px;text-align:right;top:317.5px;color:#1e1eb0;font-size:11.2px;">Station</div>
<div class="cb" style="left:988px;top:316px;width:175px;height:16px;background:#fff"></div>
<div class="ct" style="left:991px;top:316px;width:152px;height:16px;line-height:16px;color:#111">ABC PLANT INLET</div>
<div class="dd" style="left:1143px;top:316px;width:20px;height:16px"></div>
<svg class="chev" style="left:1148.0px;top:323.6px" width="9" height="6" viewBox="0 0 9 6"><path d="M1 1.2 L4.5 4.6 L8 1.2" fill="none" stroke="#3a3a3a" stroke-width="1.3"/></svg>
<div class="ib" style="left:1165px;top:316px;width:19px;height:16px"></div>
<svg class="ic" style="left:1168.0px;top:319.5px" width="13" height="9" viewBox="0 0 13 9"><path d="M0.3 4.2 L1.8 1.6 L3.2 0.6 L4.6 1.2 L5.4 0.4 L6.5 1.4 L7.6 0.4 L8.4 1.2 L9.8 0.6 L11.2 1.6 L12.7 4.2 Z" fill="#4a4a4a"/><rect x="0.2" y="4.9" width="5.6" height="4" fill="#222"/><rect x="7.2" y="4.9" width="5.6" height="4" fill="#222"/><rect x="5.8" y="2.5" width="1.4" height="2.6" fill="#333"/><rect x="2.3" y="5.6" width="0.9" height="2.6" fill="#9a9a9a"/><rect x="9.6" y="5.6" width="0.9" height="2.6" fill="#9a9a9a"/></svg>
<div class="ib" style="left:1186px;top:316px;width:19px;height:16px"></div>
<svg class="ic" style="left:1187px;top:317px" width="17" height="14" viewBox="0 0 17 14"><rect x="3.3" y="1.6" width="12.6" height="11.4" fill="#f4f8ff" stroke="#111" stroke-width="1.1"/><path d="M7.5 5 L6 6.2 L7.5 7.4 M12.5 5 L14 6.2 L12.5 7.4" fill="none" stroke="#2a4a7a" stroke-width="0.9"/><circle cx="10" cy="6" r="2" fill="#2a7ad0" stroke="#1a3a6a" stroke-width="0.6"/><rect x="6" y="9" width="8.5" height="1" fill="#6a9ad8"/><rect x="6" y="10.8" width="8.5" height="0.8" fill="#9ac0e8"/><path d="M2 10.5 L3.5 8.6 L5.5 8.8 L6.8 10.4 L5.4 12.4 L3 12.6 Z" fill="#c8d820" stroke="#6a7a00" stroke-width="0.6"/></svg>
<div class="t" style="left:584.5px;width:400px;text-align:right;top:337px;color:#141414;font-size:11.2px;">Path</div>
<div class="tb" style="left:989px;top:336px;width:63px;height:16px;background:#f0f0f0;border:1px solid #c2c2c2;"></div>
<div class="ct" style="left:991px;top:336px;width:59px;height:16px;line-height:16px;text-align:left;color:#111;">002114</div>
<div class="tb" style="left:1056px;top:336px;width:304px;height:16px;background:#f0f0f0;border:1px solid #c2c2c2;"></div>
<div class="ct" style="left:1058px;top:336px;width:300px;height:16px;line-height:16px;text-align:left;color:#111;">Meter 9 &gt; ABC Plant</div>
<div class="ib" style="left:1362px;top:336px;width:19px;height:16px"></div>
<svg class="ic" style="left:1365.0px;top:339.5px" width="13" height="9" viewBox="0 0 13 9"><path d="M0.3 4.2 L1.8 1.6 L3.2 0.6 L4.6 1.2 L5.4 0.4 L6.5 1.4 L7.6 0.4 L8.4 1.2 L9.8 0.6 L11.2 1.6 L12.7 4.2 Z" fill="#4a4a4a"/><rect x="0.2" y="4.9" width="5.6" height="4" fill="#222"/><rect x="7.2" y="4.9" width="5.6" height="4" fill="#222"/><rect x="5.8" y="2.5" width="1.4" height="2.6" fill="#333"/><rect x="2.3" y="5.6" width="0.9" height="2.6" fill="#9a9a9a"/><rect x="9.6" y="5.6" width="0.9" height="2.6" fill="#9a9a9a"/></svg>
<div class="t" style="left:584.5px;width:400px;text-align:right;top:356px;color:#141414;font-size:11.2px;">Contract</div>
<div class="cb" style="left:988px;top:355px;width:96px;height:16px;background:#fff"></div>
<div class="ct" style="left:991px;top:355px;width:74px;height:16px;line-height:16px;color:#111">SLS00004</div>
<div class="dd" style="left:1065px;top:355px;width:19px;height:16px"></div>
<svg class="chev" style="left:1069.5px;top:362.6px" width="9" height="6" viewBox="0 0 9 6"><path d="M1 1.2 L4.5 4.6 L8 1.2" fill="none" stroke="#3a3a3a" stroke-width="1.3"/></svg>
<div class="ib" style="left:1086px;top:355px;width:19px;height:16px"></div>
<svg class="ic" style="left:1089.0px;top:358.5px" width="13" height="9" viewBox="0 0 13 9"><path d="M0.3 4.2 L1.8 1.6 L3.2 0.6 L4.6 1.2 L5.4 0.4 L6.5 1.4 L7.6 0.4 L8.4 1.2 L9.8 0.6 L11.2 1.6 L12.7 4.2 Z" fill="#4a4a4a"/><rect x="0.2" y="4.9" width="5.6" height="4" fill="#222"/><rect x="7.2" y="4.9" width="5.6" height="4" fill="#222"/><rect x="5.8" y="2.5" width="1.4" height="2.6" fill="#333"/><rect x="2.3" y="5.6" width="0.9" height="2.6" fill="#9a9a9a"/><rect x="9.6" y="5.6" width="0.9" height="2.6" fill="#9a9a9a"/></svg>
<div class="cb" style="left:1107px;top:355px;width:99px;height:16px;background:#f0f0f0"></div>
<div class="ct" style="left:1110px;top:355px;width:76px;height:16px;line-height:16px;color:#111">BASE</div>
<div class="dd" style="left:1186px;top:355px;width:20px;height:16px"></div>
<svg class="chev" style="left:1191.0px;top:362.6px" width="9" height="6" viewBox="0 0 9 6"><path d="M1 1.2 L4.5 4.6 L8 1.2" fill="none" stroke="#3a3a3a" stroke-width="1.3"/></svg>
<div class="t" style="left:1210.5px;top:356px;color:#141414;font-size:11.2px;">New K Needed?</div>
<div class="cb" style="left:1293px;top:355px;width:51px;height:16px;background:#fff"></div>
<div class="ct" style="left:1296px;top:355px;width:31px;height:16px;line-height:16px;color:#111">No</div>
<div class="dd" style="left:1327px;top:355px;width:17px;height:16px"></div>
<div class="t" style="left:584.5px;width:400px;text-align:right;top:375.5px;color:#141414;font-size:10.8px;">Book Id</div>
<div class="cb" style="left:988px;top:375px;width:90px;height:16px;background:#fff"></div>
<div class="ct" style="left:991px;top:375px;width:68px;height:16px;line-height:16px;color:#111">Missing Book</div>
<div class="dd" style="left:1059px;top:375px;width:19px;height:16px"></div>
<svg class="chev" style="left:1063.5px;top:382.6px" width="9" height="6" viewBox="0 0 9 6"><path d="M1 1.2 L4.5 4.6 L8 1.2" fill="none" stroke="#3a3a3a" stroke-width="1.3"/></svg>
<div class="t" style="left:765px;width:400px;text-align:right;top:375.5px;color:#141414;font-size:11.2px;">Broker</div>
<div class="cb" style="left:1168px;top:375px;width:90px;height:16px;background:#fff"></div>
<div class="dd" style="left:1239px;top:375px;width:19px;height:16px"></div>
<svg class="chev" style="left:1243.5px;top:382.6px" width="9" height="6" viewBox="0 0 9 6"><path d="M1 1.2 L4.5 4.6 L8 1.2" fill="none" stroke="#3a3a3a" stroke-width="1.3"/></svg>
<div class="cb" style="left:1260px;top:375px;width:120px;height:16px;background:#fff"></div>
<div class="dd" style="left:1360px;top:375px;width:20px;height:16px"></div>
<svg class="chev" style="left:1365.0px;top:382.6px" width="9" height="6" viewBox="0 0 9 6"><path d="M1 1.2 L4.5 4.6 L8 1.2" fill="none" stroke="#3a3a3a" stroke-width="1.3"/></svg>
<div class="t" style="left:584.5px;width:400px;text-align:right;top:401px;color:#141414;font-size:10.7px;">Vol/Price Freq</div>
<div class="cb" style="left:988px;top:400px;width:75px;height:16px;background:#fff"></div>
<div class="ct" style="left:991px;top:400px;width:55px;height:16px;line-height:16px;color:#111">Daily</div>
<div class="dd" style="left:1046px;top:400px;width:17px;height:16px"></div>
<svg class="chev" style="left:1049.5px;top:407.6px" width="9" height="6" viewBox="0 0 9 6"><path d="M1 1.2 L4.5 4.6 L8 1.2" fill="none" stroke="#3a3a3a" stroke-width="1.3"/></svg>
<div class="t" style="left:584.5px;width:400px;text-align:right;top:419px;color:#141414;font-size:11.2px;">Unit Basis</div>
<div class="cb" style="left:988px;top:418px;width:75px;height:16px;background:#fff"></div>
<div class="ct" style="left:991px;top:418px;width:54px;height:16px;line-height:16px;color:#111">mmbtu</div>
<div class="dd" style="left:1045px;top:418px;width:18px;height:16px"></div>
<svg class="chev" style="left:1049.0px;top:425.6px" width="9" height="6" viewBox="0 0 9 6"><path d="M1 1.2 L4.5 4.6 L8 1.2" fill="none" stroke="#3a3a3a" stroke-width="1.3"/></svg>
<div class="t" style="left:749px;width:400px;text-align:center;top:438px;color:#141414;font-size:11.2px;">Base</div>
<div class="t" style="left:841px;width:400px;text-align:center;top:438px;color:#141414;font-size:11.2px;">Base</div>
<div class="t" style="left:921px;width:400px;text-align:center;top:437px;color:#141414;font-size:11.2px;">Base</div>
<div class="t" style="left:921px;width:400px;text-align:center;top:451px;color:#141414;font-size:11.2px;">Price Source</div>
<div class="r" style="left:1030px;top:465px;width:125px;height:1px;background:#111;"></div>
<div class="t" style="left:1011px;width:400px;text-align:center;top:437px;color:#141414;font-size:11.2px;">Base</div>
<div class="t" style="left:1011px;width:400px;text-align:center;top:451px;color:#141414;font-size:11.2px;">Price Ref</div>
<div class="r" style="left:1159px;top:465px;width:107px;height:1px;background:#111;"></div>
<div class="cb" style="left:1087px;top:468px;width:69px;height:16px;background:#fff"></div>
<div class="ct" style="left:1090px;top:468px;width:48px;height:16px;line-height:16px;color:#111">Fixed</div>
<div class="dd" style="left:1138px;top:468px;width:18px;height:16px"></div>
<svg class="chev" style="left:1142.0px;top:475.6px" width="9" height="6" viewBox="0 0 9 6"><path d="M1 1.2 L4.5 4.6 L8 1.2" fill="none" stroke="#3a3a3a" stroke-width="1.3"/></svg>
<div class="cb" style="left:1159px;top:468px;width:107px;height:16px;background:#fff"></div>
<div class="dd" style="left:1246px;top:468px;width:20px;height:16px"></div>
<svg class="chev" style="left:1251.0px;top:475.6px" width="9" height="6" viewBox="0 0 9 6"><path d="M1 1.2 L4.5 4.6 L8 1.2" fill="none" stroke="#3a3a3a" stroke-width="1.3"/></svg>
<div class="t" style="left:757px;width:400px;text-align:right;top:489px;color:#141414;font-size:10.6px;">Conditional:</div>
<div class="tb" style="left:1159px;top:488px;width:61px;height:16px;background:#f0f0f0;border:1px solid #c2c2c2;"></div>
<div class="t" style="left:1135.5px;width:400px;text-align:center;top:451px;color:#141414;font-size:11.2px;">Currency</div>
<div class="r" style="left:1311px;top:465px;width:49px;height:1px;background:#111;"></div>
<div class="t" style="left:1192px;width:400px;text-align:center;top:437px;color:#141414;font-size:11.2px;">Base</div>
<div class="t" style="left:1192px;width:400px;text-align:center;top:451px;color:#141414;font-size:11.2px;">Base Price</div>
<div class="r" style="left:1364px;top:465px;width:56px;height:1px;background:#111;"></div>
<div class="t" style="left:1254px;width:400px;text-align:center;top:437px;color:#141414;font-size:11.2px;">Base</div>
<div class="t" style="left:1254px;width:400px;text-align:center;top:451px;color:#141414;font-size:11.2px;">Adjustment</div>
<div class="r" style="left:1424px;top:465px;width:61px;height:1px;background:#111;"></div>
<div class="cb" style="left:1310px;top:468px;width:51px;height:16px;background:#fff"></div>
<div class="ct" style="left:1313px;top:468px;width:28px;height:16px;line-height:16px;color:#111">US DOLLAR</div>
<div class="dd" style="left:1341px;top:468px;width:20px;height:16px"></div>
<svg class="chev" style="left:1346.0px;top:475.6px" width="9" height="6" viewBox="0 0 9 6"><path d="M1 1.2 L4.5 4.6 L8 1.2" fill="none" stroke="#3a3a3a" stroke-width="1.3"/></svg>
<div class="tb" style="left:1363px;top:468px;width:58px;height:16px;background:#fff;border:1px solid #b0b0b0;"></div>
<div class="ct" style="left:1364px;top:468px;width:56px;height:16px;line-height:16px;text-align:right;color:#111;">.000000</div>
<div class="tb" style="left:1423px;top:468px;width:62px;height:16px;background:#fff;border:1px solid #b0b0b0;"></div>
<div class="ct" style="left:1424px;top:468px;width:60px;height:16px;line-height:16px;text-align:right;color:#111;">.000000</div>
<div class="r" style="left:1040px;top:565px;width:459px;height:36px;border:1px solid #a8a8a8;box-sizing:border-box;"></div>
<div class="r" style="left:330px;top:443px;width:771px;height:240px;background:#fff;border:1px solid #5f5f5f;box-shadow:0 0 14px 4px rgba(0,0,0,0.22);box-sizing:border-box"></div>
<svg class="ic" style="left:334px;top:448px" width="16" height="16" viewBox="0 0 16 16"><defs><clipPath id="cc"><circle cx="7.8" cy="7.8" r="7.6"/></clipPath><linearGradient id="bg1" x1="0" y1="0" x2="1" y2="1"><stop offset="0" stop-color="#2a2ad0"/><stop offset="1" stop-color="#2a6ae0"/></linearGradient></defs><g clip-path="url(#cc)"><path d="M-1 -1 H17 V0.5 L14.2 1.8 Q10.6 7 9.4 14.2 Q6.2 7.2 -1 5.2Z" fill="url(#bg1)"/><path d="M-1 6.4 Q5.6 8 8.6 15.2 L8.4 17 H-1Z" fill="#a30f0f"/><path d="M17 1.5 L15 2.6 Q11.6 7.6 10.3 15.4 L10.4 17 H17Z" fill="#1a8a1a"/></g></svg>
<div class="t" style="left:355px;top:448.5px;color:#111;font-size:11.8px;">Path Template Selection</div>
<svg class="ic" style="left:1079px;top:450px" width="12" height="12" viewBox="0 0 12 12"><path d="M1 1 L11 11 M11 1 L1 11" stroke="#222" stroke-width="1.1"/></svg>
<div class="t" style="left:340.5px;top:476px;color:#1a1a1a;font-size:10.5px;">Receipt Station</div>
<div class="tb" style="left:415px;top:476px;width:74px;height:19px;background:#fff;border:1px solid #7a7a7a;"></div>
<div class="tb" style="left:492px;top:476px;width:114px;height:19px;background:#fff;border:1px solid #7a7a7a;"></div>
<div class="ib" style="left:610px;top:475px;width:20px;height:20px"></div>
<svg class="ic" style="left:613.5px;top:480.5px" width="13" height="9" viewBox="0 0 13 9"><path d="M0.3 4.2 L1.8 1.6 L3.2 0.6 L4.6 1.2 L5.4 0.4 L6.5 1.4 L7.6 0.4 L8.4 1.2 L9.8 0.6 L11.2 1.6 L12.7 4.2 Z" fill="#4a4a4a"/><rect x="0.2" y="4.9" width="5.6" height="4" fill="#222"/><rect x="7.2" y="4.9" width="5.6" height="4" fill="#222"/><rect x="5.8" y="2.5" width="1.4" height="2.6" fill="#333"/><rect x="2.3" y="5.6" width="0.9" height="2.6" fill="#9a9a9a"/><rect x="9.6" y="5.6" width="0.9" height="2.6" fill="#9a9a9a"/></svg>
<div class="bt" style="left:646px;top:477px;width:51px;height:17px;line-height:16px;background:#e1e1e1;border-color:#adadad;color:#111">Search</div>
<div class="bt" style="left:700px;top:477px;width:52px;height:17px;line-height:16px;background:#e1e1e1;border-color:#adadad;color:#111">Clear</div>
<div class="bt" style="left:754px;top:477px;width:46px;height:17px;line-height:16px;background:#e1e1e1;border-color:#adadad;color:#111">Help</div>
<div class="bt" style="left:802px;top:477px;width:46px;height:17px;line-height:16px;background:#e1e1e1;border-color:#adadad;color:#111">Exit</div>
<div class="r" style="left:336px;top:500px;width:758px;height:200px;border-top:2px solid #6a6a6a;border-left:2px solid #737373;border-right:1px solid #cfcfcf;box-sizing:border-box"></div>
<div class="t" style="left:347px;top:514.5px;color:#1a1a1a;font-size:10.9px;font-weight:bold;">Path #</div>
<div class="t" style="left:347px;top:530.5px;color:#1a1a1a;font-size:10.9px;font-weight:bold;">Name</div>
<div class="t" style="left:347px;top:546.5px;color:#1a1a1a;font-size:10.9px;font-weight:bold;">Descr</div>
<div class="tb" style="left:404px;top:514px;width:62px;height:15px;border:1px solid #111;background:#fff"></div>
<div class="ct" style="left:405.5px;top:514px;width:59px;height:15px;line-height:12px;font-size:9.3px;color:#222">002114</div>
<div class="tb" style="left:404px;top:530px;width:150px;height:15px;border:1px solid #111;background:#fff"></div>
<div class="ct" style="left:405.5px;top:530px;width:147px;height:15px;line-height:12px;font-size:9.3px;color:#222">Meter 9 &gt; ABC Plant</div>
<div class="tb" style="left:404px;top:546px;width:209px;height:15px;border:1px solid #111;background:#fff"></div>
<div class="ct" style="left:405.5px;top:546px;width:206px;height:15px;line-height:12px;font-size:9.3px;color:#222">Meter 9 &gt; ABC Plant</div>
<div class="r" style="left:615px;top:512px;width:1px;height:52px;background:#333;"></div>
<div class="t" style="left:621px;top:514.5px;color:#1a1a1a;font-size:10.9px;font-weight:bold;">Beg Pipe</div>
<div class="t" style="left:621px;top:530.5px;color:#1a1a1a;font-size:10.9px;font-weight:bold;">Beg Sta</div>
<div class="t" style="left:621px;top:546.5px;color:#1a1a1a;font-size:10.9px;font-weight:bold;">Name</div>
<div class="tb" style="left:679px;top:514px;width:59px;height:15px;border:1px solid #111;background:#fff"></div>
<div class="ct" style="left:680.5px;top:514px;width:56px;height:15px;line-height:12px;font-size:9.3px;color:#222">CMOBCCCG</div>
<div class="tb" style="left:679px;top:530px;width:94px;height:15px;border:1px solid #111;background:#fff"></div>
<div class="ct" style="left:680.5px;top:530px;width:91px;height:15px;line-height:12px;font-size:9.3px;color:#222">Meter 9</div>
<div class="tb" style="left:679px;top:546px;width:156px;height:15px;border:1px solid #111;background:#fff"></div>
<div class="ct" style="left:680.5px;top:546px;width:153px;height:15px;line-height:12px;font-size:9.3px;color:#222">METER 9</div>
<div class="r" style="left:840px;top:512px;width:1px;height:52px;background:#333;"></div>
<div class="t" style="left:846px;top:514.5px;color:#1a1a1a;font-size:10.9px;font-weight:bold;">End Pipe</div>
<div class="t" style="left:846px;top:530.5px;color:#1a1a1a;font-size:10.9px;font-weight:bold;">End Sta</div>
<div class="t" style="left:846px;top:546.5px;color:#1a1a1a;font-size:10.9px;font-weight:bold;">Name</div>
<div class="tb" style="left:905px;top:514px;width:59px;height:15px;border:1px solid #111;background:#fff"></div>
<div class="ct" style="left:906.5px;top:514px;width:56px;height:15px;line-height:12px;font-size:9.3px;color:#222">ABC</div>
<div class="tb" style="left:905px;top:530px;width:98px;height:15px;border:1px solid #111;background:#fff"></div>
<div class="ct" style="left:906.5px;top:530px;width:95px;height:15px;line-height:12px;font-size:9.3px;color:#222">ABC Plant Inlet</div>
<div class="tb" style="left:905px;top:546px;width:188px;height:15px;border:1px solid #111;background:#fff"></div>
<div class="ct" style="left:906.5px;top:546px;width:185px;height:15px;line-height:12px;font-size:9.3px;color:#222">ABC PLANT INLET</div>
<div class="r" style="left:337px;top:585px;width:756px;height:15px;background:#0078d7;"></div>
<div class="r" style="left:337px;top:565px;width:756px;height:40px;overflow:hidden">
<div class="r" style="left:25px;top:6px;width:29px;height:15px;border:1px solid #111;border-bottom:none;background:#fff;box-sizing:border-box;overflow:hidden;text-align:center;font-size:10.4px;line-height:15px;color:#111">Leg</div>
<div class="r" style="left:26px;top:21px;width:28px;height:14px;border:1px solid #0b2447;background:#0a74d0;box-sizing:border-box;overflow:hidden;white-space:nowrap;font-size:9.1px;letter-spacing:-0.1px;line-height:12px;color:#fff;padding-left:1px">0002</div>
<div class="r" style="left:55px;top:6px;width:49px;height:15px;border:1px solid #111;border-bottom:none;background:#fff;box-sizing:border-box;overflow:hidden;text-align:center;font-size:10.4px;line-height:15px;color:#111">Pipe</div>
<div class="r" style="left:56px;top:21px;width:48px;height:14px;border:1px solid #0b2447;background:#0a74d0;box-sizing:border-box;overflow:hidden;white-space:nowrap;font-size:9.1px;letter-spacing:-0.1px;line-height:12px;color:#fff;padding-left:1px">ABC</div>
<div class="r" style="left:105px;top:6px;width:108px;height:15px;border:1px solid #111;border-bottom:none;background:#fff;box-sizing:border-box;overflow:hidden;text-align:center;font-size:10.4px;line-height:15px;color:#111">Beg Sta</div>
<div class="r" style="left:106px;top:21px;width:107px;height:14px;border:1px solid #0b2447;background:#0a74d0;box-sizing:border-box;overflow:hidden;white-space:nowrap;font-size:9.1px;letter-spacing:-0.1px;line-height:12px;color:#fff;padding-left:1px">From XCL</div>
<div class="r" style="left:214px;top:6px;width:147px;height:15px;border:1px solid #111;border-bottom:none;background:#fff;box-sizing:border-box;overflow:hidden;text-align:center;font-size:10.4px;line-height:15px;color:#111">Name</div>
<div class="r" style="left:215px;top:21px;width:146px;height:14px;border:1px solid #0b2447;background:#0a74d0;box-sizing:border-box;overflow:hidden;white-space:nowrap;font-size:9.1px;letter-spacing:-0.1px;line-height:12px;color:#fff;padding-left:1px">FROM XCL</div>
<div class="r" style="left:363px;top:6px;width:24px;height:15px;border:1px solid #111;border-bottom:none;background:#fff;box-sizing:border-box;overflow:hidden;text-align:center;font-size:10.4px;line-height:15px;color:#111">Type</div>
<div class="r" style="left:364px;top:21px;width:23px;height:14px;border:1px solid #0b2447;background:#0a74d0;box-sizing:border-box;overflow:hidden;white-space:nowrap;font-size:9.1px;letter-spacing:-0.1px;line-height:12px;color:#fff;padding-left:1px">INR</div>
<div class="r" style="left:388px;top:6px;width:108px;height:15px;border:1px solid #111;border-bottom:none;background:#fff;box-sizing:border-box;overflow:hidden;text-align:center;font-size:10.4px;line-height:15px;color:#111">End Sta</div>
<div class="r" style="left:389px;top:21px;width:107px;height:14px;border:1px solid #0b2447;background:#0a74d0;box-sizing:border-box;overflow:hidden;white-space:nowrap;font-size:9.1px;letter-spacing:-0.1px;line-height:12px;color:#fff;padding-left:1px">ABC Plant Inlet</div>
<div class="r" style="left:497px;top:6px;width:147px;height:15px;border:1px solid #111;border-bottom:none;background:#fff;box-sizing:border-box;overflow:hidden;text-align:center;font-size:10.4px;line-height:15px;color:#111">Name</div>
<div class="r" style="left:498px;top:21px;width:146px;height:14px;border:1px solid #0b2447;background:#0a74d0;box-sizing:border-box;overflow:hidden;white-space:nowrap;font-size:9.1px;letter-spacing:-0.1px;line-height:12px;color:#fff;padding-left:1px">ABC PLANT INLET</div>
<div class="r" style="left:645px;top:6px;width:26px;height:15px;border:1px solid #111;border-bottom:none;background:#fff;box-sizing:border-box;overflow:hidden;text-align:center;font-size:10.4px;line-height:15px;color:#111">Type</div>
<div class="r" style="left:646px;top:21px;width:25px;height:14px;border:1px solid #0b2447;background:#0a74d0;box-sizing:border-box;overflow:hidden;white-space:nowrap;font-size:9.1px;letter-spacing:-0.1px;line-height:12px;color:#fff;padding-left:1px">PLI</div>
<div class="r" style="left:672px;top:6px;width:47px;height:15px;border:1px solid #111;border-bottom:none;background:#fff;box-sizing:border-box;overflow:hidden;text-align:center;font-size:10.4px;line-height:15px;color:#111">K</div>
<div class="r" style="left:673px;top:21px;width:46px;height:14px;border:1px solid #0b2447;background:#0a74d0;box-sizing:border-box;overflow:hidden;white-space:nowrap;font-size:9.1px;letter-spacing:-0.1px;line-height:12px;color:#fff;padding-left:1px">PRO00001</div>
<div class="r" style="left:720px;top:6px;width:43px;height:15px;border:1px solid #111;border-bottom:none;background:#fff;box-sizing:border-box;overflow:hidden;text-align:center;font-size:10.4px;line-height:15px;color:#111"><span style="position:absolute;left:16px;top:0">Transport</span></div>
<div class="r" style="left:721px;top:21px;width:42px;height:14px;border:1px solid #0b2447;background:#0a74d0;box-sizing:border-box;overflow:hidden;white-space:nowrap;font-size:9.1px;letter-spacing:-0.1px;line-height:12px;color:#fff;padding-left:1px">10060846</div>
</div>
<svg class="ic" style="left:0;top:0" width="1599" height="663" viewBox="0 0 1599 663"><path d="M1364 356.5 L1013 464.5" stroke="#f01414" stroke-width="5.5" stroke-linecap="round" fill="none"/><path d="M990 471.4 L1014.7 454 L1013.5 462 L1015.8 466.5 L1020.2 472 Z" fill="#f01414" stroke="#f01414" stroke-width="1" stroke-linejoin="round"/></svg>
<svg class="ic" style="left:1068.5px;top:380.5px" width="14" height="22" viewBox="0 0 14 22"><path d="M1 1 L1 16 L4.5 12.8 L7.2 19.5 L9.6 18.5 L7 12 L12 12 Z" fill="#fff" stroke="#222" stroke-width="1"/></svg>
</body></html>
